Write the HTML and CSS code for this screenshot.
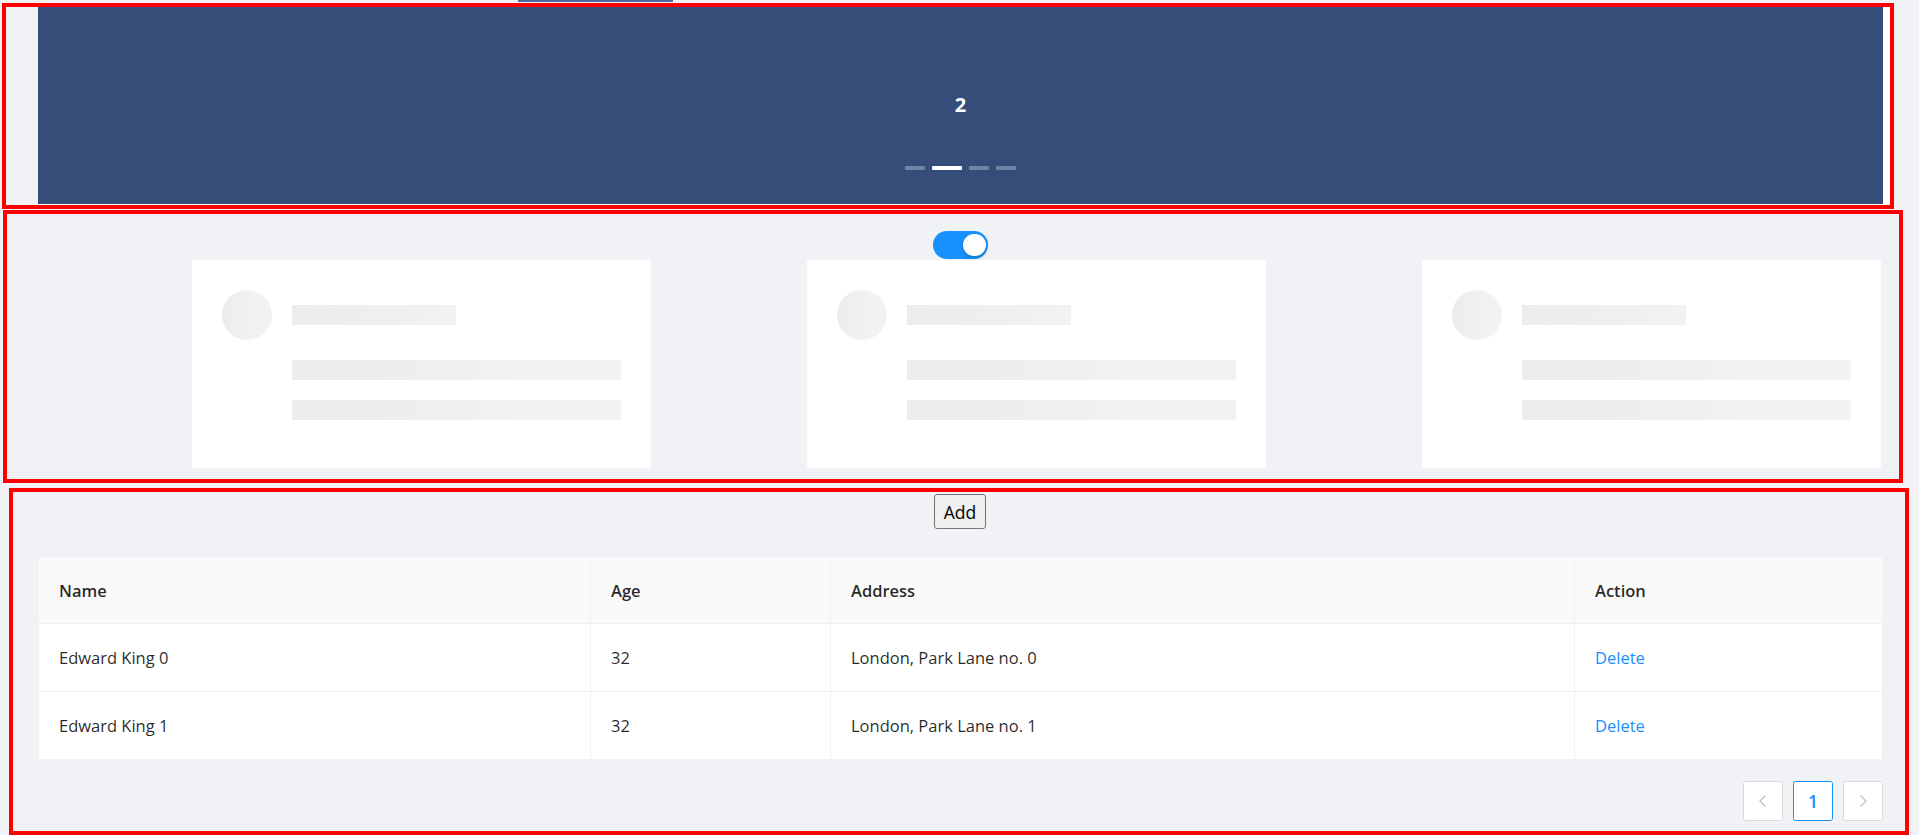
FILE: index.html
```html
<!DOCTYPE html>
<html lang="en">
<head>
<meta charset="utf-8">
<title>Demo</title>
<link rel="stylesheet" href="styles.css">
</head>
<body>
<div class="topline"></div>

<section class="frame frame-carousel">
  <div class="slide">
    <h3 class="slide-title">2</h3>
    <ul class="dots">
      <li class="dot"></li>
      <li class="dot dot-active"></li>
      <li class="dot"></li>
      <li class="dot"></li>
    </ul>
  </div>
</section>

<section class="frame frame-cards">
  <div class="switch-row">
    <button class="switch" type="button" aria-checked="true"><span class="switch-knob"></span></button>
  </div>
  <div class="cards">
    <div class="card">
      <div class="sk-avatar"></div>
      <div class="sk-content">
        <div class="sk-title"></div>
        <div class="sk-line"></div>
        <div class="sk-line"></div>
      </div>
    </div>
    <div class="card">
      <div class="sk-avatar"></div>
      <div class="sk-content">
        <div class="sk-title"></div>
        <div class="sk-line"></div>
        <div class="sk-line"></div>
      </div>
    </div>
    <div class="card">
      <div class="sk-avatar"></div>
      <div class="sk-content">
        <div class="sk-title"></div>
        <div class="sk-line"></div>
        <div class="sk-line"></div>
      </div>
    </div>
  </div>
</section>

<section class="frame frame-table">
  <div class="add-row"><button class="add-btn" type="button">Add</button></div>
  <table class="table">
    <thead>
      <tr>
        <th class="col-name">Name</th>
        <th class="col-age">Age</th>
        <th class="col-addr">Address</th>
        <th class="col-act">Action</th>
      </tr>
    </thead>
    <tbody>
      <tr>
        <td>Edward King 0</td>
        <td>32</td>
        <td>London, Park Lane no. 0</td>
        <td><a class="link" href="#">Delete</a></td>
      </tr>
      <tr>
        <td>Edward King 1</td>
        <td>32</td>
        <td>London, Park Lane no. 1</td>
        <td><a class="link" href="#">Delete</a></td>
      </tr>
    </tbody>
  </table>
  <ul class="pager">
    <li class="pg-item pg-disabled">
      <svg viewBox="0 0 16 16" width="16" height="16"><path d="M10.5 2.5 L5 8 L10.5 13.5" fill="none" stroke="currentColor" stroke-width="1.3"/></svg>
    </li>
    <li class="pg-item pg-active">1</li>
    <li class="pg-item pg-disabled">
      <svg viewBox="0 0 16 16" width="16" height="16"><path d="M5.5 2.5 L11 8 L5.5 13.5" fill="none" stroke="currentColor" stroke-width="1.3"/></svg>
    </li>
  </ul>
</section>
</body>
</html>
```

FILE: styles.css
```css
* { box-sizing: border-box; }

html, body {
  margin: 0;
  padding: 0;
  overflow: hidden;
}

body {
  background: #f0f2f5;
  font-family: "Open Sans", "Noto Sans", Arial, sans-serif;
  font-size: 16.5px;
  color: rgba(0, 0, 0, 0.85);
  width: 1919px;
  height: 835px;
}

.topline {
  width: 155px;
  height: 2px;
  margin-left: 518px;
  background: #4a6aa0;
}

.frame {
  border: 4px solid #ff0000;
}

/* ---------- carousel ---------- */
.frame-carousel {
  width: 1892px;
  height: 206px;
  margin: 1px 0 0 2px;
  padding-left: 32px;
}

.slide {
  position: relative;
  height: 100%;
  background: #ffffff;
  padding: 0 7px 1px 0;
}

.slide-title {
  margin: 0;
  height: 197px;
  line-height: 195px;
  background: #364d79;
  color: #ffffff;
  text-align: center;
  font-size: 20px;
  font-weight: 700;
}

.dots {
  position: absolute;
  left: 0;
  right: 7px;
  top: 159px;
  margin: 0;
  padding: 0;
  list-style: none;
  display: flex;
  justify-content: center;
  gap: 7px;
}

.dot {
  width: 20px;
  height: 4px;
  border-radius: 1px;
  background: rgba(255, 255, 255, 0.3);
}

.dot-active {
  width: 30px;
  background: #ffffff;
}

/* ---------- cards ---------- */
.frame-cards {
  width: 1900px;
  height: 273px;
  margin: 1px 0 0 3px;
  padding: 17px 0 0 0;
}

.switch-row {
  display: flex;
  padding-left: 926px;
  height: 28px;
}

.switch {
  position: relative;
  width: 55px;
  height: 27.5px;
  border: 0;
  padding: 0;
  border-radius: 14px;
  background: #1890ff;
}

.switch-knob {
  position: absolute;
  top: 2.5px;
  right: 2.5px;
  width: 22.5px;
  height: 22.5px;
  border-radius: 50%;
  background: #ffffff;
  box-shadow: 0 2px 4px rgba(0, 35, 11, 0.2);
}

.cards {
  display: grid;
  grid-template-columns: 459px 459px 459px;
  column-gap: 156px;
  padding-left: 185px;
  margin-top: 1px;
}

.card {
  display: flex;
  height: 208px;
  padding: 30px;
  background: #ffffff;
  border-radius: 2px;
}

.sk-avatar {
  flex: none;
  width: 50px;
  height: 50px;
  border-radius: 50%;
  margin-right: 20px;
  background: linear-gradient(90deg, #ebebeb 0%, #f2f2f2 60%, #f2f2f2 100%);
}

.sk-content {
  flex: 1;
  padding-top: 15px;
}

.sk-title {
  width: 164px;
  height: 20px;
  background: linear-gradient(90deg, #ececec 0%, #eeeeee 40%, #f2f2f2 100%);
}

.sk-line {
  height: 20px;
  margin-top: 35px;
  background: linear-gradient(90deg, #ececec 0%, #eeeeee 35%, #f2f2f2 70%, #f2f2f2 100%);
}

.sk-line + .sk-line {
  margin-top: 20px;
}

/* ---------- table ---------- */
.frame-table {
  width: 1900px;
  height: 347px;
  margin: 5px 0 0 9px;
  padding: 2px 0 0 26px;
}

.add-row {
  display: flex;
  padding-left: 895px;
}

.add-btn {
  width: 52px;
  height: 35px;
  font-family: inherit;
  font-size: 17.5px;
  color: #000;
  background: #efefef;
  border: 1px solid #767676;
  border-radius: 3px;
  padding: 0;
}

.table {
  width: 1843px;
  margin-top: 28px;
  border-collapse: separate;
  border-spacing: 0;
  background: #ffffff;
  table-layout: fixed;
}

.col-name { width: 551px; }
.col-age { width: 240px; }
.col-addr { width: 744px; }
.col-act { width: 308px; }

.table th,
.table td {
  text-align: left;
  padding: 0 20px;
  border-bottom: 1px solid #f0f0f0;
  line-height: 27px;
}

.table th {
  height: 67px;
  background: #fafafa;
  font-weight: 600;
  color: rgba(0, 0, 0, 0.85);
}

.table td {
  height: 68px;
  font-weight: 400;
}

.table th + th,
.table td + td {
  border-left: 1px solid #f0f0f0;
}

.link {
  color: #1890ff;
  text-decoration: none;
}

.pager {
  display: flex;
  justify-content: flex-end;
  gap: 10px;
  margin: 21px 0 0 0;
  padding: 0;
  width: 1844px;
  list-style: none;
}

.pg-item {
  display: flex;
  align-items: center;
  justify-content: center;
  width: 40px;
  height: 40px;
  background: #ffffff;
  border: 1px solid #d9d9d9;
  border-radius: 2.5px;
  font-size: 17.5px;
}

.pg-disabled {
  color: rgba(0, 0, 0, 0.25);
}

.pg-active {
  border-color: #1890ff;
  color: #1890ff;
  font-weight: 600;
}
```
